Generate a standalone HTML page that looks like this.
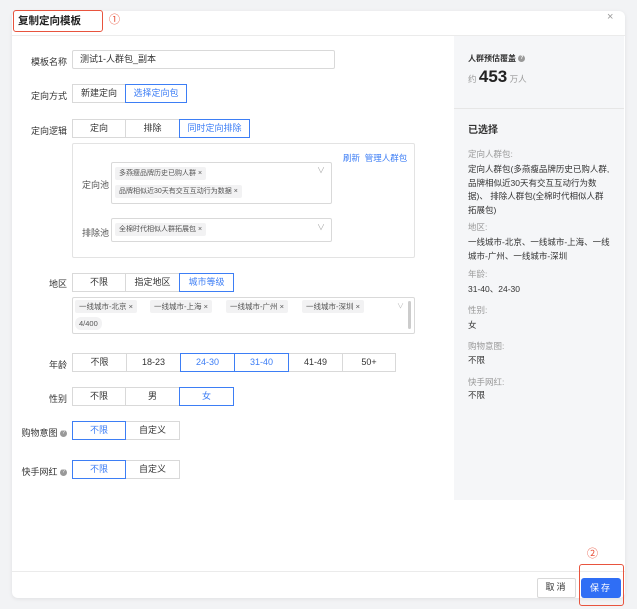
<!DOCTYPE html>
<html><head><meta charset="utf-8"><style>
*{box-sizing:border-box;margin:0;padding:0}
body{width:637px;height:609px;background:#f2f3f5;font-family:"Liberation Sans","Noto Sans CJK SC",sans-serif;font-size:9px;color:#333;position:relative;overflow:hidden}
.a{position:absolute}
.modal{left:12px;top:11px;width:613px;height:587px;background:#fff;border-radius:6px;box-shadow:0 1px 4px rgba(0,0,0,.08)}
.lbl{position:absolute;text-align:right;width:60px;font-size:9px;color:#333}
.btn{position:absolute;height:19px;border:1px solid #d9d9d9;background:#fff;text-align:center;line-height:17px;font-size:9px;color:#333}
.sel{border-color:#3d7ef5;color:#3d7ef5;z-index:2}
.tag{position:absolute;background:#f2f2f3;border-radius:2px;height:13px;line-height:13px;font-size:7px;color:#555;padding:0 4px}
.r{position:absolute;left:468px;font-size:8.5px;line-height:13.5px;color:#333;width:144px}
.g{color:#999}
.q{display:inline-block;width:7px;height:7px;border-radius:50%;background:#999;color:#fff;font-size:5px;line-height:7px;text-align:center;vertical-align:middle}
</style></head><body>
<div class="a modal"></div>
<div class="a" style="left:12px;top:35px;width:613px;height:1px;background:#ebebeb"></div>
<div class="a" style="left:454px;top:36px;width:170px;height:464px;background:#f5f6f8"></div>
<div class="a" style="left:454px;top:108px;width:170px;height:1px;background:#e6e6e6"></div>
<div class="a" style="left:12px;top:571px;width:613px;height:1px;background:#ebebeb"></div>
<div class="a" style="left:13px;top:10px;width:90px;height:22px;border:1.5px solid #e8543e;border-radius:3px"></div>
<div class="a" style="left:18px;top:13px;font-size:10.5px;font-weight:bold;color:#222">复制定向模板</div>
<div class="a" style="left:109px;top:11px;font-size:11px;color:#e8543e">①</div>
<div class="a" style="left:607px;top:11px;font-size:11px;color:#999">×</div>

<div class="lbl" style="left:7px;top:55px">模板名称</div>
<div class="a" style="left:72px;top:50px;width:263px;height:19px;border:1px solid #d9d9d9;border-radius:2px;padding-left:7px;line-height:17px;font-size:9px">测试1-人群包_副本</div>

<div class="lbl" style="left:7px;top:89px">定向方式</div>
<div class="btn" style="left:72px;top:84px;width:54px">新建定向</div>
<div class="btn sel" style="left:125px;top:84px;width:62px">选择定向包</div>

<div class="lbl" style="left:7px;top:124px">定向逻辑</div>
<div class="btn" style="left:72px;top:119px;width:54px">定向</div>
<div class="btn" style="left:125px;top:119px;width:55px">排除</div>
<div class="btn sel" style="left:179px;top:119px;width:71px">同时定向排除</div>

<div class="a" style="left:72px;top:143px;width:343px;height:115px;border:1px solid #e3e3e3;border-radius:2px"></div>
<div class="a" style="left:343px;top:152px;font-size:8.5px;color:#3d7ef5">刷新&nbsp; 管理人群包</div>
<div class="a" style="left:82px;top:178px;font-size:9px;color:#555">定向池</div>
<div class="a" style="left:111px;top:162px;width:221px;height:42px;border:1px solid #d9d9d9;border-radius:2px"></div>
<div class="tag" style="left:115px;top:167px">多燕瘦品牌历史已购人群 ×</div>
<div class="tag" style="left:115px;top:185px">品牌相似近30天有交互互动行为数据 ×</div>
<div class="a" style="left:317px;top:165px;font-size:8px;color:#aaa">∨</div>
<div class="a" style="left:82px;top:226px;font-size:9px;color:#555">排除池</div>
<div class="a" style="left:111px;top:218px;width:221px;height:24px;border:1px solid #d9d9d9;border-radius:2px"></div>
<div class="tag" style="left:115px;top:223px">全棉时代相似人群拓展包 ×</div>
<div class="a" style="left:317px;top:222px;font-size:8px;color:#aaa">∨</div>

<div class="lbl" style="left:7px;top:277px">地区</div>
<div class="btn" style="left:72px;top:273px;width:54px">不限</div>
<div class="btn" style="left:125px;top:273px;width:55px">指定地区</div>
<div class="btn sel" style="left:179px;top:273px;width:55px">城市等级</div>
<div class="a" style="left:72px;top:297px;width:343px;height:37px;border:1px solid #d9d9d9;border-radius:2px"></div>
<div class="tag" style="left:75px;top:300px;font-size:7.5px">一线城市-北京 ×</div>
<div class="tag" style="left:150px;top:300px;font-size:7.5px">一线城市-上海 ×</div>
<div class="tag" style="left:226px;top:300px;font-size:7.5px">一线城市-广州 ×</div>
<div class="tag" style="left:302px;top:300px;font-size:7.5px">一线城市-深圳 ×</div>
<div class="tag" style="left:75px;top:317px;font-size:7.5px;border-radius:6px">4/400</div>
<div class="a" style="left:397px;top:301px;font-size:7px;color:#bbb">∨</div>
<div class="a" style="left:408px;top:301px;width:3px;height:28px;background:#ccc;border-radius:2px"></div>

<div class="lbl" style="left:7px;top:358px">年龄</div>
<div class="btn" style="left:72px;top:353px;width:55px">不限</div>
<div class="btn" style="left:126px;top:353px;width:55px">18-23</div>
<div class="btn sel" style="left:180px;top:353px;width:55px">24-30</div>
<div class="btn sel" style="left:234px;top:353px;width:55px">31-40</div>
<div class="btn" style="left:288px;top:353px;width:55px">41-49</div>
<div class="btn" style="left:342px;top:353px;width:54px">50+</div>

<div class="lbl" style="left:7px;top:392px">性别</div>
<div class="btn" style="left:72px;top:387px;width:54px">不限</div>
<div class="btn" style="left:125px;top:387px;width:55px">男</div>
<div class="btn sel" style="left:179px;top:387px;width:55px">女</div>

<div class="lbl" style="left:7px;top:426px">购物意图 <span class="q">?</span></div>
<div class="btn sel" style="left:72px;top:421px;width:54px">不限</div>
<div class="btn" style="left:125px;top:421px;width:55px">自定义</div>

<div class="lbl" style="left:7px;top:465px">快手网红 <span class="q">?</span></div>
<div class="btn sel" style="left:72px;top:460px;width:54px">不限</div>
<div class="btn" style="left:125px;top:460px;width:55px">自定义</div>

<div class="r" style="top:52px;font-weight:bold;font-size:8px">人群预估覆盖 <span class="q">?</span></div>
<div class="r" style="top:70px;color:#999">约 <span style="font-size:17px;font-weight:bold;color:#222">453</span> 万人</div>
<div class="r" style="top:124px;font-size:10px;font-weight:bold">已选择</div>
<div class="r g" style="top:148px">定向人群包:</div>
<div class="r" style="top:163px">定向人群包(多燕瘦品牌历史已购人群,品牌相似近30天有交互互动行为数据)、 排除人群包(全棉时代相似人群拓展包)</div>
<div class="r g" style="top:221px">地区:</div>
<div class="r" style="top:236px">一线城市-北京、一线城市-上海、一线城市-广州、一线城市-深圳</div>
<div class="r g" style="top:268px">年龄:</div>
<div class="r" style="top:283px">31-40、24-30</div>
<div class="r g" style="top:304px">性别:</div>
<div class="r" style="top:319px">女</div>
<div class="r g" style="top:340px">购物意图:</div>
<div class="r" style="top:354px">不限</div>
<div class="r g" style="top:376px">快手网红:</div>
<div class="r" style="top:389px">不限</div>

<div class="a" style="left:587px;top:545px;font-size:11px;color:#e8543e">②</div>
<div class="btn" style="left:537px;top:578px;width:39px;height:20px;border-radius:2px;letter-spacing:2px">取消</div>
<div class="a" style="left:581px;top:578px;width:40px;height:20px;background:#2f6ef5;color:#fff;border-radius:3px;text-align:center;line-height:20px;font-size:9px;letter-spacing:2px">保存</div>
<div class="a" style="left:579px;top:564px;width:45px;height:42px;border:1.5px solid #e8543e;border-radius:3px"></div>
</body></html>
